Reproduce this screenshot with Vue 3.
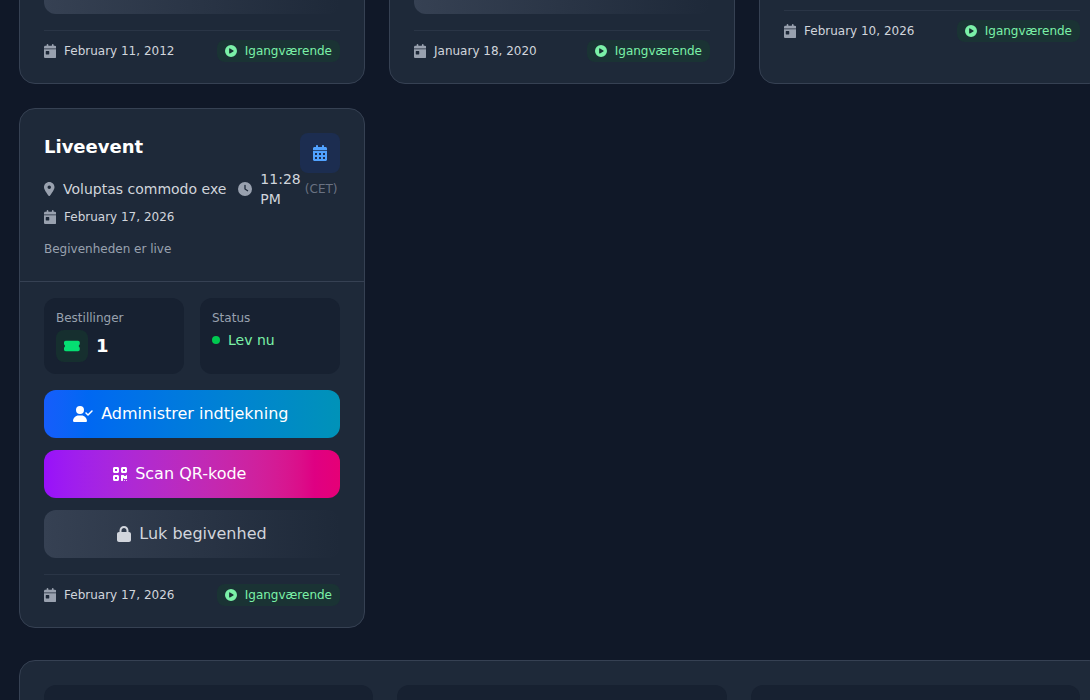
<script setup>
import { h } from 'vue'

const paths = {
  day: [448, 'M128 0c17.7 0 32 14.3 32 32l0 32 128 0 0-32c0-17.7 14.3-32 32-32s32 14.3 32 32l0 32 48 0c26.5 0 48 21.5 48 48l0 54L0 166l0-54C0 85.5 21.5 64 48 64l48 0 0-32c0-17.7 14.3-32 32-32zM0 192l448 0 0 272c0 26.5-21.5 48-48 48L48 512c-26.5 0-48-21.5-48-48L0 192zm80 64c-8.8 0-16 7.2-16 16l0 96c0 8.8 7.2 16 16 16l96 0c8.8 0 16-7.2 16-16l0-96c0-8.8-7.2-16-16-16l-96 0z'],
  days: [448, 'M128 0c17.7 0 32 14.3 32 32l0 32 128 0 0-32c0-17.7 14.3-32 32-32s32 14.3 32 32l0 32 48 0c26.5 0 48 21.5 48 48l0 54L0 166l0-54C0 85.5 21.5 64 48 64l48 0 0-32c0-17.7 14.3-32 32-32zM0 192l448 0 0 272c0 26.5-21.5 48-48 48L48 512c-26.5 0-48-21.5-48-48L0 192zM64 256h64v64h-64zM192 256h64v64h-64zM320 256h64v64h-64zM64 384h64v64h-64zM192 384h64v64h-64zM320 384h64v64h-64z'],
  pin: [384, 'M215.7 499.2C267 435 384 279.4 384 192C384 86 298 0 192 0S0 86 0 192c0 87.4 117 243 168.3 307.2c12.3 15.3 35.1 15.3 47.4 0zM192 128a64 64 0 1 1 0 128 64 64 0 1 1 0-128z'],
  clock: [512, 'M256 0a256 256 0 1 1 0 512A256 256 0 1 1 256 0zM232 120l0 136c0 8 4 15.5 10.7 20l96 64c11 7.4 25.9 4.4 33.3-6.7s4.4-25.9-6.7-33.3L280 243.2 280 120c0-13.3-10.7-24-24-24s-24 10.7-24 24z'],
  play: [512, 'M0 256a256 256 0 1 1 512 0A256 256 0 1 1 0 256zM188.3 147.1c-7.6 4.2-12.3 12.3-12.3 20.9l0 176c0 8.7 4.7 16.7 12.3 20.9s16.8 4.1 24.3-.5l144-88c7.1-4.4 11.5-12.1 11.5-20.5s-4.4-16.1-11.5-20.5l-144-88c-7.4-4.5-16.7-4.7-24.3-.5z'],
  lock: [448, 'M144 144l0 48 160 0 0-48c0-44.2-35.8-80-80-80s-80 35.8-80 80zM80 192l0-48C80 64.5 144.5 0 224 0s144 64.5 144 144l0 48 16 0c35.3 0 64 28.7 64 64l0 192c0 35.3-28.7 64-64 64L64 512c-35.3 0-64-28.7-64-64L0 256c0-35.3 28.7-64 64-64l16 0z'],
  user: [640, 'M96 128a128 128 0 1 1 256 0A128 128 0 1 1 96 128zM0 482.3C0 383.8 79.8 304 178.3 304l91.4 0C368.2 304 448 383.8 448 482.3c0 16.4-13.3 29.7-29.7 29.7L29.7 512C13.3 512 0 498.7 0 482.3zM625 177L497 305c-9.4 9.4-24.6 9.4-33.9 0l-64-64c-9.4-9.4-9.4-24.6 0-33.9s24.6-9.4 33.9 0l47 47L591 143c9.4-9.4 24.6-9.4 33.9 0s9.4 24.6 0 33.9z'],
  ticket: [576, 'M0 128C0 92.7 28.7 64 64 64l448 0c35.3 0 64 28.7 64 64l0 64c0 8.8-7.4 15.7-15.7 18.6C549 217.1 540 235 540 256s9 38.9 20.3 45.4c8.3 2.9 15.7 9.8 15.7 18.6l0 64c0 35.3-28.7 64-64 64L64 448c-35.3 0-64-28.7-64-64l0-64c0-8.8 7.4-15.7 15.7-18.6C27 294.9 36 277 36 256s-9-38.9-20.3-45.4C7.4 207.7 0 200.8 0 192l0-64z'],
  qr: [448, 'M0 80C0 53.5 21.5 32 48 32l96 0c26.5 0 48 21.5 48 48l0 96c0 26.5-21.5 48-48 48l-96 0c-26.5 0-48-21.5-48-48zM64 96v64h64v-64zM0 336c0-26.5 21.5-48 48-48l96 0c26.5 0 48 21.5 48 48l0 96c0 26.5-21.5 48-48 48l-96 0c-26.5 0-48-21.5-48-48zM64 352v64h64v-64zM256 80c0-26.5 21.5-48 48-48l96 0c26.5 0 48 21.5 48 48l0 96c0 26.5-21.5 48-48 48l-96 0c-26.5 0-48-21.5-48-48zM320 96v64h64v-64zM256 304c0-8.8 7.2-16 16-16l64 0c8.8 0 16 7.2 16 16s7.2 16 16 16l32 0c8.8 0 16-7.2 16-16s7.2-16 16-16s16 7.2 16 16l0 96c0 8.8-7.2 16-16 16l-64 0c-8.8 0-16-7.2-16-16s-7.2-16-16-16s-16 7.2-16 16l0 64c0 8.8-7.2 16-16 16l-32 0c-8.8 0-16-7.2-16-16zM368 448a16 16 0 1 1 0 32a16 16 0 1 1 0-32zM432 448a16 16 0 1 1 0 32a16 16 0 1 1 0-32z'],
}

const Icon = ({ name, size }) => {
  const [w, d] = paths[name]
  return h('svg', { viewBox: `0 0 ${w} 512`, width: (w / 512) * size, height: size, fill: 'currentColor' },
    [h('path', { d, 'fill-rule': 'evenodd' })])
}
Icon.props = ['name', 'size']

const CardFooter = ({ date }) => h('div', { class: 'footer' }, [
  h('span', { class: 'date' }, [h(Icon, { name: 'day', size: 14 }), h('span', date)]),
  h('span', { class: 'badge' }, [h(Icon, { name: 'play', size: 12 }), h('span', 'Igangværende')]),
])
CardFooter.props = ['date']

const previous = [
  { date: 'February 11, 2012', closable: true },
  { date: 'January 18, 2020', closable: true },
  { date: 'February 10, 2026', closable: false },
]
</script>

<template>
  <div class="page">
    <div class="events">
      <article v-for="event in previous" :key="event.date" class="card">
        <div class="body" :class="event.closable ? 'tall' : 'short'">
          <div v-if="event.closable" class="button close"></div>
          <CardFooter :date="event.date" />
        </div>
      </article>

      <article class="card">
        <header class="head">
          <div class="summary">
            <h3>Liveevent</h3>
            <div class="meta">
              <span class="place"><Icon name="pin" :size="14" /><span>Voluptas commodo exe</span></span>
              <span class="time">
                <Icon name="clock" :size="14" />
                <span class="hour">11:28 PM</span>
                <span class="zone">(CET)</span>
              </span>
            </div>
            <div class="date"><Icon name="day" :size="14" /><span>February 17, 2026</span></div>
            <p>Begivenheden er live</p>
          </div>
          <div class="calendar"><Icon name="days" :size="16" /></div>
        </header>
        <div class="body">
          <div class="stats">
            <div class="stat">
              <div class="label">Bestillinger</div>
              <div class="orders"><span class="ticket"><Icon name="ticket" :size="14" /></span><b>1</b></div>
            </div>
            <div class="stat">
              <div class="label">Status</div>
              <div class="live"><i></i><span>Lev nu</span></div>
            </div>
          </div>
          <div class="actions">
            <button class="button checkin"><Icon name="user" :size="16" /><span>Administrer indtjekning</span></button>
            <button class="button scan"><Icon name="qr" :size="16" /><span>Scan QR-kode</span></button>
            <button class="button close"><Icon name="lock" :size="16" /><span>Luk begivenhed</span></button>
          </div>
          <CardFooter date="February 17, 2026" />
        </div>
      </article>
    </div>

    <section class="panel">
      <div v-for="n in 3" :key="n" class="tile"></div>
    </section>
  </div>
</template>

<style>
body { background: #101828; overflow: hidden; }
</style>

<style scoped>
.page {
  box-sizing: border-box;
  width: 1090px;
  height: 700px;
  padding-left: 19px;
  overflow: hidden;
  background: #101828;
  color: #d1d5dc;
  font-family: "DejaVu Sans", sans-serif;
  font-size: 14px;
  line-height: 20px;
}
.page :deep(*) { box-sizing: border-box; }
.page :deep(svg) { display: block; flex: none; }
.events {
  display: grid;
  grid-template-columns: repeat(3, 346px);
  gap: 24px;
  margin-top: -52px;
}
.card {
  border: 1px solid #364153;
  border-radius: 16px;
  background: #1e2939;
  overflow: hidden;
}
.head {
  display: flex;
  position: relative;
  padding: 24px;
  height: 173px;
  border-bottom: 1px solid #364153;
}
.summary { width: 296px; }
h3 { margin: 0 0 8px; color: #fff; font-size: 18px; line-height: 28px; font-weight: 700; }
.meta { display: flex; align-items: center; gap: 12px; height: 40px; }
.place, .time { display: flex; align-items: center; white-space: nowrap; }
.place { gap: 8.5px; }
.hour { width: 41px; margin-left: 8px; white-space: normal; }
.zone { margin-left: 3.5px; color: #6a7282; font-size: 12px; }
.meta :deep(svg), .page :deep(.date svg) { color: #99a1af; }
.page :deep(.date) { display: flex; align-items: center; gap: 7.75px; height: 16px; font-size: 12px; line-height: 16px; }
p { margin: 16px 0 0; color: #99a1af; font-size: 12px; line-height: 16px; }
.calendar {
  position: absolute;
  top: 24px;
  right: 24px;
  display: grid;
  place-items: center;
  width: 40px;
  height: 40px;
  border-radius: 8px;
  background: #1c2d50;
  color: #51a2ff;
}
.body { padding: 16px 24px 20px; }
.body.tall { padding-top: 17px; }
.body.short { padding-top: 61px; padding-bottom: 40px; }
.body.short :deep(.footer) { margin-top: 0; }
.stats { display: grid; grid-template-columns: 1fr 1fr; gap: 16px; }
.stat { height: 76px; padding: 12px; border-radius: 12px; background: #172131; }
.label { margin-bottom: 4px; color: #99a1af; font-size: 12px; line-height: 16px; }
.orders { display: flex; align-items: center; gap: 8px; color: #fff; font-size: 18px; line-height: 28px; }
.ticket { display: grid; place-items: center; width: 32px; height: 32px; border-radius: 8px; background: #162f2f; color: #05df72; }
.live { display: flex; align-items: center; gap: 8px; color: #7bf1a8; }
.live i { width: 8px; height: 8px; border-radius: 50%; background: #00c950; }
.actions { display: grid; gap: 12px; margin-top: 16px; }
.button {
  display: flex;
  align-items: center;
  justify-content: center;
  gap: 8px;
  width: 296px;
  height: 48px;
  padding: 0;
  border: 0;
  border-radius: 12px;
  color: #fff;
  font: 16px/24px "DejaVu Sans", sans-serif;
}
.checkin { padding-right: 22.4px; background: linear-gradient(to right in oklab, oklch(54.6% .245 262.881), oklch(60.9% .126 221.723)); }
.scan { padding-right: 24.4px; background: linear-gradient(to right in oklab, oklch(55.8% .288 302.321), oklch(59.2% .249 .584)); }
.close { color: #d1d5dc; background: linear-gradient(to right in oklab, #364153, #1e2939); }
.page :deep(.footer) {
  display: flex;
  align-items: center;
  justify-content: space-between;
  height: 33px;
  margin-top: 16px;
  padding-top: 8px;
  border-top: 1px solid #2a3546;
}
.page :deep(.badge) {
  display: flex;
  align-items: center;
  gap: 8px;
  height: 22px;
  padding: 0 8px;
  border-radius: 8px;
  background: #1a3334;
  color: #7bf1a8;
  font-size: 12px;
  line-height: 16px;
}
.panel {
  display: grid;
  grid-template-columns: repeat(3, 1fr);
  gap: 24px;
  width: 1086px;
  height: 140px;
  margin-top: 32px;
  padding: 24px;
  border: 1px solid #364153;
  border-radius: 16px;
  background: #1e2939;
}
.tile { border-radius: 12px; background: #172131; }
</style>
